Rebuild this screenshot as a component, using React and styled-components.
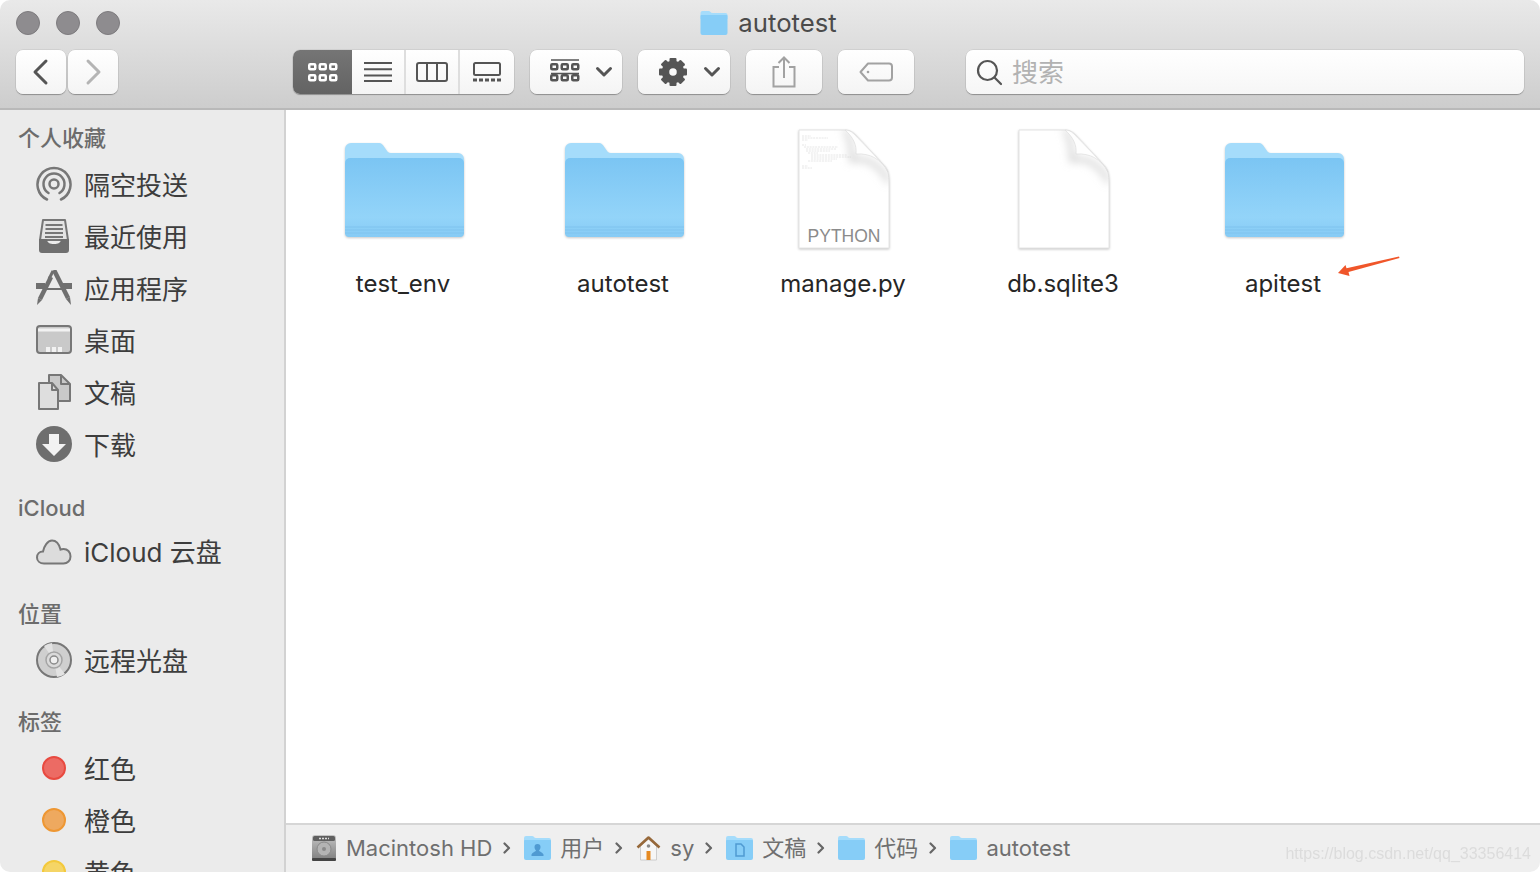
import React from 'react'
import styled, { createGlobalStyle } from 'styled-components'

const Global = createGlobalStyle`
html, body { margin: 0; padding: 0; background: #fff; }
body { font-family: Inter, "Noto Sans CJK SC", sans-serif; -webkit-font-smoothing: antialiased; }
* { box-sizing: border-box; }
`

const Win = styled.div`
width: 1540px;
height: 872px;
border-radius: 10px;
overflow: hidden;
display: flex;
flex-direction: column;
background: #fff;
`

const Head = styled.header`
height: 110px;
flex: none;
background: linear-gradient(#e9e9e9, #cdcdcd);
border-bottom: 2px solid #b9b9b9;
`

const TitleRow = styled.div`
height: 44px;
padding-top: 1px;
display: grid;
grid-template-columns: 1fr auto 1fr;
align-items: center;
`

const Lights = styled.div`
display: flex;
gap: 16px;
padding-left: 16px;
`

const Light = styled.span`
width: 24px;
height: 24px;
border-radius: 50%;
background: #8e8c8f;
border: 1px solid #7d7b7e;
`

const Title = styled.div`
display: flex;
align-items: center;
gap: 9px;
font-size: 25.7px;
color: #4b4b4b;
margin-left: -4px;
`

const Tools = styled.div`
height: 46px;
padding: 6px 16px 0;
display: flex;
align-items: flex-start;
`

const Btn = styled.div`
width: ${p => p.$w}px;
height: 44px;
flex: none;
margin-left: ${p => p.$ml || 0}px;
display: flex;
align-items: center;
justify-content: ${p => p.$between ? 'space-between' : 'center'};
padding: ${p => p.$between ? '0 9px 0 20px' : '0'};
border-radius: 7px;
background: linear-gradient(#fff, #f4f4f4);
box-shadow: 0 1px 1px rgba(0,0,0,.28), 0 0 0 .5px rgba(0,0,0,.1);
`

const Seg = styled.div`
display: flex;
margin-left: 175px;
height: 44px;
flex: none;
width: 221px;
border-radius: 7px;
overflow: hidden;
background: linear-gradient(#fff, #f4f4f4);
box-shadow: 0 1px 1px rgba(0,0,0,.28), 0 0 0 .5px rgba(0,0,0,.1);
`

const SegItem = styled.div`
width: ${p => p.$w}px;
display: flex;
align-items: center;
justify-content: center;
background: ${p => p.$on ? 'linear-gradient(#757575, #636363)' : 'transparent'};
border-right: ${p => p.$sep ? '2px solid #dedede' : 'none'};
`

const Search = styled.div`
flex: 1;
height: 44px;
margin-left: 52px;
display: flex;
align-items: center;
gap: 10px;
padding-left: 10px;
font-size: 26px;
color: #b2b2b2;
border-radius: 7px;
background: linear-gradient(#fff, #f6f6f6);
box-shadow: 0 1px 1px rgba(0,0,0,.28), 0 0 0 .5px rgba(0,0,0,.1);
`

const Label = styled.span`
margin-bottom: ${p => p.$lift ?? 4}px;
`

const Body = styled.div`
flex: 1;
display: flex;
min-height: 0;
`

const Side = styled.nav`
width: 286px;
flex: none;
background: #ebebeb;
border-right: 2px solid #d2d2d2;
overflow: hidden;
`

const SideTitle = styled.div`
height: 28px;
margin: ${p => p.$top}px 0 ${p => p.$bottom}px 18px;
font-size: 22px;
line-height: 28px;
font-weight: 500;
color: #6c6c6c;
`

const SideRow = styled.div`
height: 52px;
display: flex;
align-items: center;
gap: 12px;
padding-left: 36px;
font-size: 26px;
color: #3d3d3d;
`

const IconBox = styled.span`
width: 36px;
height: 36px;
flex: none;
margin-bottom: 2px;
display: flex;
align-items: center;
justify-content: center;
`

const Dot = styled.span`
width: 24px;
height: 24px;
border-radius: 50%;
background: ${p => p.$bg};
border: 2px solid ${p => p.$line};
`

const Pane = styled.main`
flex: 1;
position: relative;
display: flex;
flex-direction: column;
min-width: 0;
`

const Grid = styled.div`
flex: 1;
display: flex;
align-items: flex-start;
padding: 18px 0 0 7px;
`

const Item = styled.div`
width: 220px;
display: flex;
flex-direction: column;
align-items: center;
`

const Thumb = styled.div`
height: 124px;
margin-left: 2px;
position: relative;
display: flex;
align-items: ${p => p.$doc ? 'flex-start' : 'flex-end'};
justify-content: center;
padding: ${p => p.$doc ? '1px 0 0' : '0 0 15px'};
svg { filter: drop-shadow(0 1px 1px rgba(0,0,0,.22)); }
`

const Kind = styled.span`
position: absolute;
left: 0;
right: 0;
bottom: 5px;
text-align: center;
font-size: 17.5px;
color: #8b8b8b;
font-family: "Liberation Sans", sans-serif;
`

const Name = styled.div`
margin-top: 15px;
font-size: 24px;
line-height: 34px;
color: #262626;
`

const Arrow = styled.svg`
position: absolute;
left: 1050px;
top: 145px;
`

const Path = styled.footer`
height: 49px;
flex: none;
display: flex;
align-items: center;
padding: 0 0 2px 25px;
background: #efefef;
border-top: 2px solid #d6d6d6;
font-size: 22px;
color: #6f6f6f;
`

const Crumb = styled.span`
display: flex;
align-items: center;
gap: 9px;
`

const Sep = styled.svg`
margin: 0 13px 0 11px;
flex: none;
`

const Mark = styled.span`
position: absolute;
right: 9px;
bottom: 9px;
font-size: 16px;
font-family: "Liberation Sans", sans-serif;
color: #dcdcdc;
filter: blur(.3px);
`

const G = '#777'

function Chev({ dir, color }) {
    return (
        <svg width="18" height="28" viewBox="0 0 18 28" fill="none" stroke={color} strokeWidth="3" strokeLinecap="round" strokeLinejoin="round">
            <path d={dir === 'l' ? 'M14 3 3 14l11 11' : 'M4 3l11 11L4 25'} />
        </svg>
    )
}

function Down() {
    return (
        <svg width="18" height="12" viewBox="0 0 18 12" fill="none" stroke="#555" strokeWidth="3" strokeLinecap="round" strokeLinejoin="round">
            <path d="M2.5 2.5 9 9l6.5-6.5" />
        </svg>
    )
}

function Squares({ color, x = 0, y = 0 }) {
    const cells = [[0, 0], [10.5, 0], [21, 0], [0, 11], [10.5, 11], [21, 11]]
    return (
        <g fill="none" stroke={color} strokeWidth="2.5">
            {cells.map(([cx, cy], i) => <rect key={i} x={x + cx + 1.25} y={y + cy + 1.25} width="6" height="5" rx="1" />)}
        </g>
    )
}

function Gear() {
    const teeth = [0, 45, 90, 135, 180, 225, 270, 315]
    return (
        <svg width="30" height="30" viewBox="0 0 30 30">
            <circle cx="15" cy="15" r="7.500" fill="none" stroke="#555" strokeWidth="7.500" />
            {teeth.map(a => <rect key={a} x="11.500" y="1" width="7" height="7" rx="1" fill="#555" transform={`rotate(${a} 15 15)`} />)}
        </svg>
    )
}

function Folder({ name }) {
    const grad = `folder-${name}`
    return (
        <svg width="119" height="94" viewBox="0 0 119 94">
            <defs>
                <linearGradient id={grad} x1="0" y1="0" x2="0" y2="1">
                    <stop offset="0" stopColor="#7bc5f3" />
                    <stop offset=".75" stopColor="#93d4f9" />
                    <stop offset="1" stopColor="#86cbf5" />
                </linearGradient>
            </defs>
            <path d="M0 6a6 6 0 0 1 6-6h27c4 0 5 2 7 5s3 5 6 5h67a6 6 0 0 1 6 6v30H0z" fill="#a5dcfb" />
            <path d="M0 20a5 5 0 0 1 5-5h109a5 5 0 0 1 5 5v70a4 4 0 0 1-4 4H4a4 4 0 0 1-4-4z" fill={`url(#${grad})`} />
            <path d="M0 84h119M0 87h119M0 90h119" stroke="#7fc3ee" strokeWidth="1" />
        </svg>
    )
}

function Doc({ name, lines }) {
    const blur = `blur-${name}`
    const clip = `clip-${name}`
    const page = 'M2 1h46c5 0 8 2 11 5l26 28c5 5 7 10 7 17v68H2z'
    return (
        <svg width="95" height="122" viewBox="0 0 95 122">
            <defs>
                <filter id={blur} x="-30%" y="-30%" width="160%" height="160%">
                    <feGaussianBlur stdDeviation="4" />
                </filter>
                <clipPath id={clip}><path d={page} /></clipPath>
            </defs>
            <path d={page} fill="#fff" stroke="#e4e4e4" strokeWidth="1" />
            {lines && (
                <g stroke="#cdcdcd" strokeWidth=".5" strokeDasharray="2 .8">
                    <path d="M5 7h9M5 9h26M5 11h6M5 16h4M7 18h34M9 20h30M9 22h24M11 24h10M14 26h36M14 28h40M14 30h26M11 32h24M5 37h6M5 39h10" />
                </g>
            )}
            <g clipPath={`url(#${clip})`}>
                <path d="M48 0c5 8 7 18 7 31 14-3 27 4 37 22" fill="none" stroke="#c9c9c9" strokeWidth="4" filter={`url(#${blur})`} />
            </g>
            <path d="M48 1c3 0 6 1 9 4l28 29c3 3 5 6 6 9-7-13-18-19-32-18 1-9-3-17-11-24z" fill="#fefefe" stroke="#dcdcdc" strokeWidth=".7" strokeLinejoin="round" />
        </svg>
    )
}

function AirDrop() {
    return (
        <svg width="36" height="36" viewBox="0 0 36 36" fill="none" stroke={G} strokeWidth="2.500">
            <path d="M11 33.500a16.500 16.500 0 1 1 14 0" strokeLinecap="round" />
            <path d="M12.500 27a10.500 10.500 0 1 1 11 0" strokeLinecap="round" />
            <circle cx="18" cy="18" r="4.500" />
        </svg>
    )
}

function Recents() {
    return (
        <svg width="36" height="36" viewBox="0 0 36 36">
            <path d="M7 2h22l3 20H4z" fill="#e4e4e4" stroke={G} strokeWidth="2" strokeLinejoin="round" />
            <path d="M9.500 7h17M9.500 11h17.500M9 15h18M9 19h18" stroke={G} strokeWidth="1.800" />
            <path d="M3 21h8c0 4 3 5 7 5s7-1 7-5h8v11a3 3 0 0 1-3 3H6a3 3 0 0 1-3-3z" fill="#6f6f6f" />
        </svg>
    )
}

function Apps() {
    return (
        <svg width="36" height="36" viewBox="0 0 36 36" fill="none">
            <path d="M0 16h9M27 16h9" stroke="#6f6f6f" strokeWidth="6" />
            <path d="M8 19h20" stroke="#6f6f6f" strokeWidth="2" />
            <path d="M15 7 4 29" stroke="#6f6f6f" strokeWidth="4.500" />
            <path d="M2 28l4 2-5 5z" fill="#6f6f6f" />
            <path d="M18 0l14 28" stroke="#6f6f6f" strokeWidth="4.500" />
            <path d="M17 1l-4 8" stroke="#6f6f6f" strokeWidth="3" />
            <path d="M30 29l4-2 1 8z" fill="#6f6f6f" />
        </svg>
    )
}

function Desktop() {
    return (
        <svg width="36" height="30" viewBox="0 0 36 30">
            <rect x="1" y="1" width="34" height="27" rx="3" fill="#c9c9c9" stroke={G} strokeWidth="2" />
            <path d="M2 5h32" stroke="#f2f2f2" strokeWidth="3" />
            <path d="M10 22h4v5h-4zM16 22h4v5h-4zM22 22h4v5h-4z" fill="#f2f2f2" />
        </svg>
    )
}

function Docs() {
    return (
        <svg width="36" height="36" viewBox="0 0 36 36" strokeLinejoin="round">
            <path d="M13 1h12l9 9v17H13z" fill="#c9c9c9" stroke={G} strokeWidth="2" />
            <path d="M25 1v9h9" fill="none" stroke={G} strokeWidth="2" />
            <path d="M3 9h13l6 7v19H3z" fill="#dedede" stroke={G} strokeWidth="2" />
            <path d="M16 9v7h6" fill="none" stroke={G} strokeWidth="2" />
        </svg>
    )
}

function Download() {
    return (
        <svg width="36" height="36" viewBox="0 0 36 36">
            <circle cx="18" cy="18" r="18" fill="#6e6e6e" />
            <path d="M13 8h10v10h7L18 30 6 18h7z" fill="#f2f2f2" />
        </svg>
    )
}

function Cloud() {
    return (
        <svg width="36" height="26" viewBox="0 0 36 26">
            <path d="M8 24.500c-4 0-7-2.500-7-6 0-3.500 2.500-6 6-6 1-5 4.500-11 9-11 4 0 7 3 8.500 9 1-.5 2-.5 3-.5 4 0 7 3 7 7.500 0 4-3 7-7 7z" fill="#dcdcdc" stroke={G} strokeWidth="2" />
        </svg>
    )
}

function Disc() {
    return (
        <svg width="36" height="36" viewBox="0 0 36 36">
            <circle cx="18" cy="18" r="17" fill="#cfcfcf" stroke={G} strokeWidth="2" />
            <path d="M18 18 8 4a17 17 0 0 1 8-3zM18 18l11 14a17 17 0 0 1-8 3z" fill="#e2e2e2" />
            <circle cx="18" cy="18" r="8" fill="#dadada" stroke="#a4a4a4" strokeWidth="1.500" />
            <circle cx="18" cy="18" r="4" fill="#efefef" stroke="#8a8a8a" strokeWidth="1.500" />
        </svg>
    )
}

function Drive() {
    return (
        <svg width="26" height="28" viewBox="0 0 26 28">
            <defs>
                <linearGradient id="drive-metal" x1="0" y1="0" x2="0" y2="1">
                    <stop offset="0" stopColor="#c4c4c4" />
                    <stop offset="1" stopColor="#7c7c7c" />
                </linearGradient>
            </defs>
            <rect x="1" y="1" width="24" height="26" rx="3" fill="url(#drive-metal)" />
            <rect x="2" y="2" width="22" height="5" rx="1.500" fill="#5f5f5f" />
            <path d="M8 4.500h10" stroke="#ddd" strokeWidth="1.500" strokeDasharray="2 1" />
            <circle cx="13" cy="15" r="7" fill="#b4b4b4" stroke="#8a8a8a" />
            <circle cx="13" cy="15" r="2" fill="#8a8a8a" />
            <rect x="1" y="24" width="24" height="3" rx="1" fill="#444" />
        </svg>
    )
}

function SmallFolder({ glyph, w = 27, h = 24 }) {
    return (
        <svg width={w} height={h} viewBox="0 0 27 24">
            <path d="M0 2a2 2 0 0 1 2-2h6c2 0 2 2 4 2h13a2 2 0 0 1 2 2v4H0z" fill="#a5dcfb" />
            <path d="M0 5a1 1 0 0 1 1-1h25a1 1 0 0 1 1 1v17a2 2 0 0 1-2 2H2a2 2 0 0 1-2-2z" fill="#86cdf7" />
            {glyph === 'user' && <path d="M13.500 8a3 3 0 0 1 3 3c0 2-1 3-1.500 3.500 0 1 3.500 1.500 4.500 4v1.500H7.500v-1.500c1-2.500 4.500-3 4.500-4-.5-.5-1.500-1.500-1.500-3.500a3 3 0 0 1 3-3z" fill="#4f9ad2" />}
            {glyph === 'doc' && <path d="M10 8h5l3 3v9h-8z" fill="none" stroke="#4f9ad2" strokeWidth="1.500" />}
        </svg>
    )
}

function Home() {
    return (
        <svg width="25" height="26" viewBox="0 0 25 26">
            <path d="M4.500 11 12.500 4l8 7v14h-16z" fill="#f6f6f6" stroke="#c4c4c4" strokeWidth=".8" />
            <path d="M1.500 12.500 12.500 2.500l11 10" fill="none" stroke="#96683a" strokeWidth="2.600" strokeLinejoin="round" />
            <rect x="10.500" y="16" width="4" height="9" fill="#e58a23" />
            <circle cx="12.500" cy="11" r="1.800" fill="#8a8a8a" />
        </svg>
    )
}

function Caret() {
    return (
        <Sep width="8" height="14" viewBox="0 0 8 14" fill="none" stroke="#666" strokeWidth="2.200" strokeLinecap="round" strokeLinejoin="round">
            <path d="M1.500 2.500 6 7l-4.500 4.500" />
        </Sep>
    )
}

const favourites = [
    ['隔空投送', <AirDrop />],
    ['最近使用', <Recents />],
    ['应用程序', <Apps />],
    ['桌面', <Desktop />],
    ['文稿', <Docs />],
    ['下载', <Download />],
]

const tags = [
    ['红色', '#ec6b64', '#e84a40'],
    ['橙色', '#eea95f', '#ee9733'],
    ['黄色', '#f5d566', '#f3c93c'],
]

const files = [
    { name: 'test_env' },
    { name: 'autotest' },
    { name: 'manage.py', doc: true, kind: 'PYTHON' },
    { name: 'db.sqlite3', doc: true },
    { name: 'apitest' },
]

function App() {
    return (
        <>
            <Global />
            <Win>
                <Head>
                    <TitleRow>
                        <Lights><Light /><Light /><Light /></Lights>
                        <Title><SmallFolder w={30} h={24} />autotest</Title>
                    </TitleRow>
                    <Tools>
                        <Btn $w={50}><Chev dir="l" color="#555" /></Btn>
                        <Btn $w={50} $ml={2}><Chev dir="r" color="#b4b4b4" /></Btn>
                        <Seg>
                            <SegItem $w={59} $on>
                                <svg width="30" height="20" viewBox="0 0 30 20"><Squares color="#fff" x={0} y={1} /></svg>
                            </SegItem>
                            <SegItem $w={54} $sep>
                                <svg width="28" height="20" viewBox="0 0 28 20" stroke="#555" strokeWidth="2"><path d="M0 1h28M0 7.300h28M0 13.600h28M0 19h28" /></svg>
                            </SegItem>
                            <SegItem $w={54} $sep>
                                <svg width="32" height="20" viewBox="0 0 32 20" fill="none" stroke="#555" strokeWidth="2"><rect x="1" y="1" width="30" height="18" rx="2" /><path d="M11 1v18M21 1v18" /></svg>
                            </SegItem>
                            <SegItem $w={54}>
                                <svg width="28" height="20" viewBox="0 0 28 20" fill="none" stroke="#555" strokeWidth="2"><rect x="1" y="1" width="26" height="12" rx="1.500" /><path d="M0 18h28" strokeWidth="3" strokeDasharray="4 2" /></svg>
                            </SegItem>
                        </Seg>
                        <Btn $w={92} $ml={16} $between>
                            <svg width="30" height="27" viewBox="0 0 30 27"><path d="M1 1h28M1 14.500h28" stroke="#555" strokeWidth="1.500" /><Squares color="#555" x={0} y={4} /></svg>
                            <Down />
                        </Btn>
                        <Btn $w={92} $ml={16} $between>
                            <Gear />
                            <Down />
                        </Btn>
                        <Btn $w={76} $ml={16}>
                            <svg width="24" height="32" viewBox="0 0 24 32" fill="none" stroke="#a2a2a2" strokeWidth="2"><path d="M7 11H1.500v19.500h21V11H17M12 22V2M6.500 7 12 1.500 17.500 7" /></svg>
                        </Btn>
                        <Btn $w={76} $ml={16}>
                            <svg width="34" height="20" viewBox="0 0 34 20" fill="none" stroke="#a2a2a2" strokeWidth="2"><path d="M9 1.500h21a3 3 0 0 1 3 3v11a3 3 0 0 1-3 3H9L1.500 10z" strokeLinejoin="round" /><circle cx="9" cy="10" r="1.300" fill="#a2a2a2" stroke="none" /></svg>
                        </Btn>
                        <Search>
                            <svg width="26" height="28" viewBox="0 0 26 28" fill="none" stroke="#555" strokeWidth="2.200"><circle cx="11.500" cy="12.500" r="9.500" /><path d="M18.500 19.500 25 26" strokeLinecap="round" /></svg>
                            <Label $lift={3}>搜索</Label>
                        </Search>
                    </Tools>
                </Head>
                <Body>
                    <Side>
                        <SideTitle $top={14} $bottom={7}>个人收藏</SideTitle>
                        {favourites.map(([label, icon]) => (
                            <SideRow key={label}><IconBox>{icon}</IconBox><Label>{label}</Label></SideRow>
                        ))}
                        <SideTitle $top={23} $bottom={5}>iCloud</SideTitle>
                        <SideRow><IconBox><Cloud /></IconBox><Label $lift={5}>iCloud 云盘</Label></SideRow>
                        <SideTitle $top={21} $bottom={7}>位置</SideTitle>
                        <SideRow><IconBox><Disc /></IconBox><Label>远程光盘</Label></SideRow>
                        <SideTitle $top={21} $bottom={7}>标签</SideTitle>
                        {tags.map(([label, bg, line]) => (
                            <SideRow key={label}><IconBox><Dot $bg={bg} $line={line} /></IconBox><Label>{label}</Label></SideRow>
                        ))}
                    </Side>
                    <Pane>
                        <Grid>
                            {files.map(f => (
                                <Item key={f.name}>
                                    <Thumb $doc={f.doc}>
                                        {f.doc ? <Doc name={f.name} lines={!!f.kind} /> : <Folder name={f.name} />}
                                        {f.kind && <Kind>{f.kind}</Kind>}
                                    </Thumb>
                                    <Name>{f.name}</Name>
                                </Item>
                            ))}
                        </Grid>
                        <Arrow width="66" height="22" viewBox="0 0 66 22">
                            <path d="M2 18 9.500 10l1 3.200L63 1.500l.5 1.500L12.500 17l1 4z" fill="#f0562a" />
                        </Arrow>
                        <Path>
                            <Crumb><Drive /><span>Macintosh HD</span></Crumb>
                            <Caret />
                            <Crumb><SmallFolder glyph="user" /><Label $lift={3}>用户</Label></Crumb>
                            <Caret />
                            <Crumb><Home />sy</Crumb>
                            <Caret />
                            <Crumb><SmallFolder glyph="doc" /><Label $lift={3}>文稿</Label></Crumb>
                            <Caret />
                            <Crumb><SmallFolder /><Label $lift={3}>代码</Label></Crumb>
                            <Caret />
                            <Crumb><SmallFolder />autotest</Crumb>
                        </Path>
                        <Mark>https://blog.csdn.net/qq_33356414</Mark>
                    </Pane>
                </Body>
            </Win>
        </>
    )
}

export default App
